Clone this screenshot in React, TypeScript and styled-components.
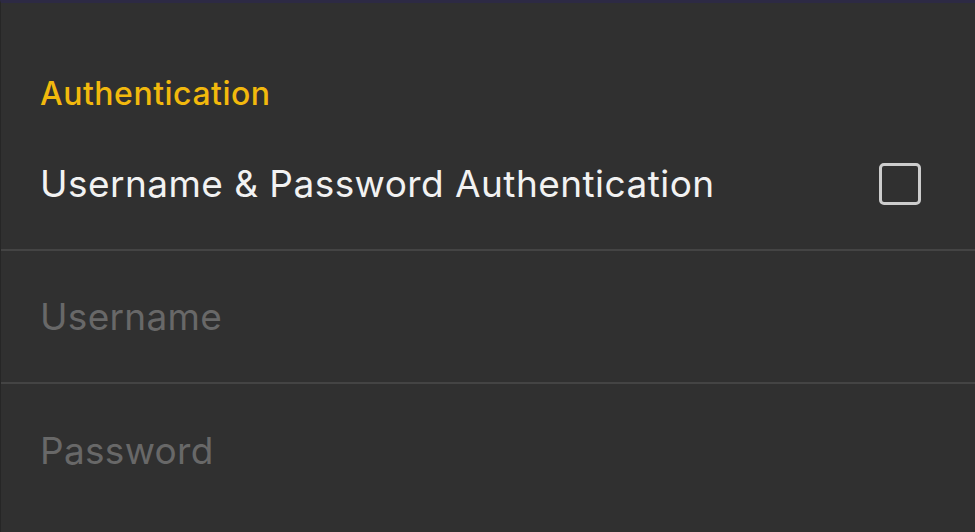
import React from "react";
import styled, { createGlobalStyle } from "styled-components";

const Global = createGlobalStyle`
  html, body { margin: 0; padding: 0; background: #303030; }
  body { font-family: Inter, "Noto Sans", sans-serif; }
`;

const Screen = styled.div`
  width: 975px;
  height: 532px;
  background: #303030;
  border-top: 3px solid #2d2a44;
  border-left: 1px solid #262626;
  box-sizing: border-box;
  overflow: hidden;
  display: flex;
  flex-direction: column;
`;

const SectionTitle = styled.div`
  color: #f2b90d;
  font-size: 32px;
  font-weight: 500;
  line-height: 40px;
  padding: 71px 0 0 39px;
  height: 40px;
  letter-spacing: 0.5px;
`;

const Row = styled.div<{ $height: number; $top?: number }>`
  height: ${(p) => p.$height}px;
  display: flex;
  align-items: center;
  justify-content: space-between;
  padding: ${(p) => p.$top ?? 0}px 54px 0 39px;
  box-sizing: border-box;
`;

const Divider = styled.div`
  height: 2px;
  background: #444444;
`;

const Label = styled.span<{ $muted?: boolean }>`
  font-size: 37px;
  font-weight: 400;
  color: ${(p) => (p.$muted ? "#686868" : "#f2f2f2")};
  letter-spacing: ${(p) => (p.$muted ? 0.3 : 0.45)}px;
`;

const Checkbox = styled.div`
  width: 36px;
  height: 36px;
  border: 3px solid #cccccc;
  border-radius: 5px;
`;

export default function App() {
  return (
    <>
      <Global />
      <Screen>
        <SectionTitle>Authentication</SectionTitle>
        <Row $height={135} $top={4}>
          <Label>Username &amp; Password Authentication</Label>
          <Checkbox />
        </Row>
        <Divider />
        <Row $height={131}>
          <Label $muted>Username</Label>
        </Row>
        <Divider />
        <Row $height={132}>
          <Label $muted>Password</Label>
        </Row>
      </Screen>
    </>
  );
}
